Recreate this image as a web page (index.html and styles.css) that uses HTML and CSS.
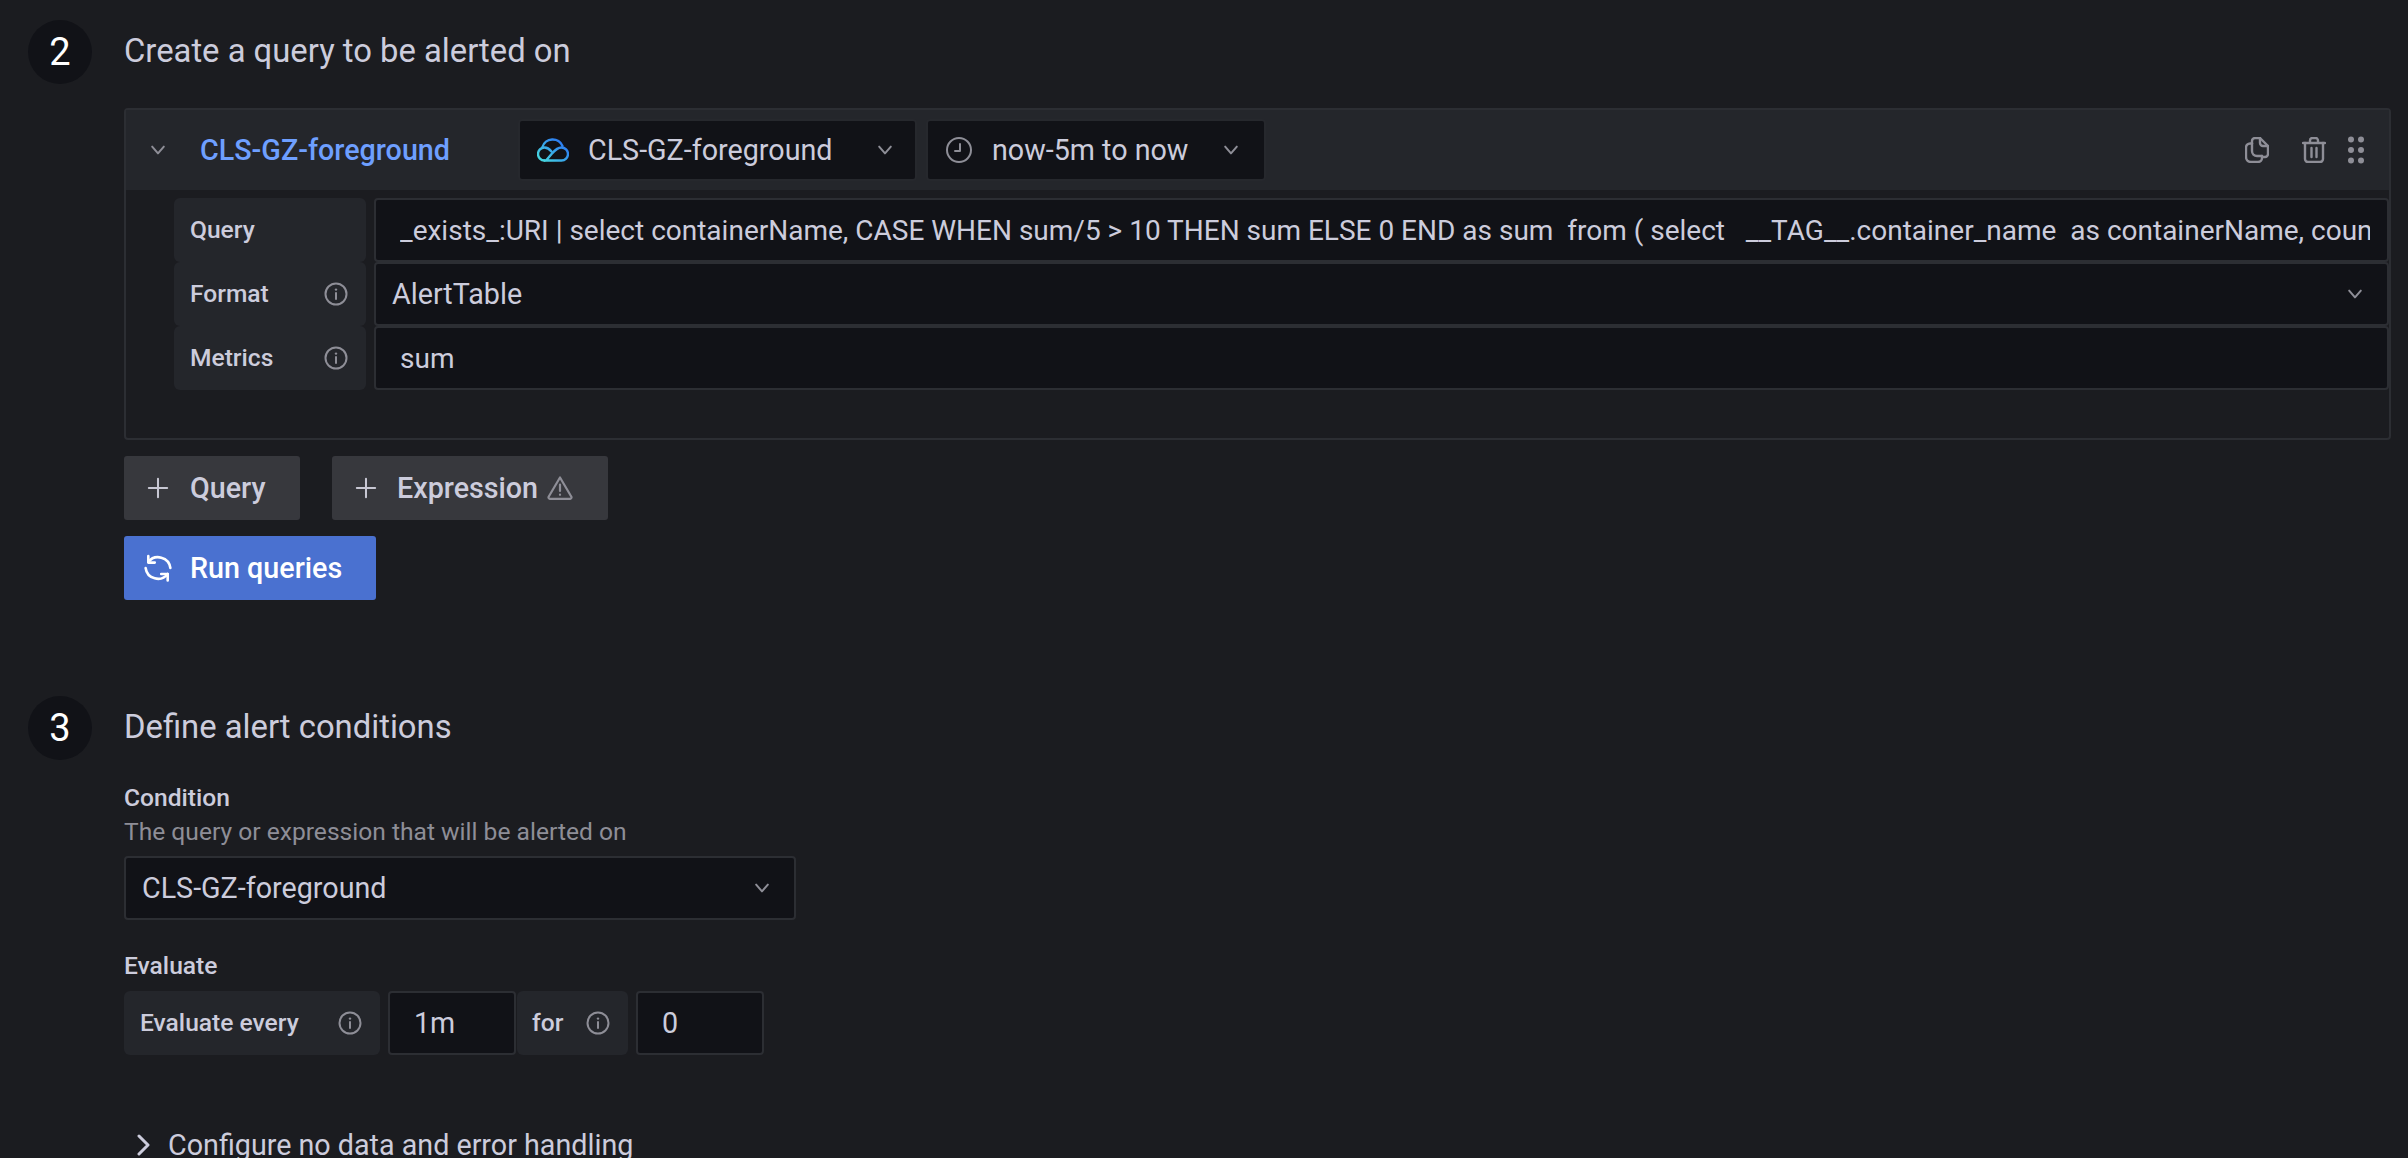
FILE: index.html
```html
<!DOCTYPE html>
<html lang="en">
<head>
<meta charset="utf-8">
<title>Alert rule</title>
<link rel="stylesheet" href="styles.css">
</head>
<body>
<svg class="defs" width="0" height="0" aria-hidden="true">
  <defs>
    <linearGradient id="cloudGrad" gradientUnits="userSpaceOnUse" x1="24" y1="0" x2="6" y2="22">
      <stop offset="0" stop-color="#2a72f5"/>
      <stop offset="1" stop-color="#45d3e0"/>
    </linearGradient>
    <symbol id="info" viewBox="0 0 24 24">
      <circle cx="12" cy="12" r="10.5" fill="none" stroke="currentColor" stroke-width="2"/>
      <path d="M12 11v6" stroke="currentColor" stroke-width="2" stroke-linecap="round"/>
      <circle cx="12" cy="7.6" r="1.2" fill="currentColor"/>
    </symbol>
    <symbol id="chev" viewBox="0 0 24 24">
      <path d="M5 8l7 8 7-8" fill="none" stroke="currentColor" stroke-width="2.4" stroke-linecap="round" stroke-linejoin="round"/>
    </symbol>
    <symbol id="plus" viewBox="0 0 24 24">
      <path d="M12 2v20M2 12h20" fill="none" stroke="currentColor" stroke-width="2.2" stroke-linecap="round"/>
    </symbol>
  </defs>
</svg>
<main class="page">
  <section class="step step-query">
    <div class="badge">2</div>
    <div class="step-body">
      <h2 class="step-title">Create a query to be alerted on</h2>
      <div class="panel">
        <div class="panel-head">
          <svg class="ico-chev head-chev"><use href="#chev"/></svg>
          <span class="query-name">CLS-GZ-foreground</span>
          <div class="picker picker-ds">
            <svg class="cloud" viewBox="0 0 32 24" fill="none" stroke="url(#cloudGrad)" stroke-width="2.4" stroke-linecap="round" stroke-linejoin="round">
              <path d="M5.500 9A10.500 10 0 0 1 25.500 8"/>
              <path d="M7.500 22.500H24.500A6.500 6.500 0 0 0 24.500 9.500C20.500 9.500 18 12 15 15.500L9.500 22"/>
              <path d="M7.500 22.500A6.500 6.500 0 0 1 7.500 9.500C10.500 9.500 12.500 11 14.500 13.500"/>
            </svg>
            <span class="picker-text">CLS-GZ-foreground</span>
            <svg class="ico-chev"><use href="#chev"/></svg>
          </div>
          <div class="picker picker-time">
            <svg class="clock" viewBox="0 0 26 26" fill="none" stroke="currentColor" stroke-width="2" stroke-linecap="round" stroke-linejoin="round">
              <circle cx="13" cy="13" r="12"/>
              <path d="M14 7v7H9"/>
            </svg>
            <span class="picker-text">now-5m to now</span>
            <svg class="ico-chev"><use href="#chev"/></svg>
          </div>
          <div class="head-actions">
            <svg class="act" viewBox="0 0 24 26" fill="none" stroke="currentColor" stroke-width="2.400" stroke-linejoin="round" stroke-linecap="round">
              <path d="M7 6.500V4a3 3 0 0 1 3-3h5l8 8v8a3 3 0 0 1-3 3h-2"/>
              <path d="M15 1v5a3 3 0 0 0 3 3h5"/>
              <path d="M7 6.500H5a4 4 0 0 0-4 4V20a5 5 0 0 0 5 5h7a4 4 0 0 0 4-4v-2"/>
              <path d="M7 6.500V14a5 5 0 0 0 5 5h5"/>
            </svg>
            <svg class="act act-trash" viewBox="0 0 24 26" fill="none" stroke="currentColor" stroke-width="2.400" stroke-linejoin="round" stroke-linecap="round">
              <path d="M1 6h22M8 6V3.500A2.500 2.500 0 0 1 10.500 1h3A2.500 2.500 0 0 1 16 3.500V6"/>
              <path d="M3 6v16a3 3 0 0 0 3 3h12a3 3 0 0 0 3-3V6"/>
              <path d="M9.500 11v9M14.500 11v9"/>
            </svg>
            <svg class="act act-dots" viewBox="0 0 16 28" fill="currentColor">
              <circle cx="3" cy="3.500" r="3"/><circle cx="13" cy="3.500" r="3"/>
              <circle cx="3" cy="14" r="3"/><circle cx="13" cy="14" r="3"/>
              <circle cx="3" cy="24.500" r="3"/><circle cx="13" cy="24.500" r="3"/>
            </svg>
          </div>
        </div>
        <div class="panel-rows">
          <div class="q-row">
            <div class="q-label">Query</div>
            <div class="field field-pad"><span class="clip">_exists_:URI | select containerName, CASE WHEN sum/5 &gt; 10 THEN sum ELSE 0 END as sum  from ( select   __TAG__.container_name  as containerName, coun</span></div>
          </div>
          <div class="q-row">
            <div class="q-label">Format<svg class="ico-info"><use href="#info"/></svg></div>
            <div class="field field-select"><span class="clip">AlertTable</span><svg class="ico-chev"><use href="#chev"/></svg></div>
          </div>
          <div class="q-row">
            <div class="q-label">Metrics<svg class="ico-info"><use href="#info"/></svg></div>
            <div class="field field-pad"><span class="clip">sum</span></div>
          </div>
        </div>
      </div>
      <div class="btn-row">
        <div class="btn btn-query"><svg class="ico-plus"><use href="#plus"/></svg>Query</div>
        <div class="btn btn-expr"><svg class="ico-plus"><use href="#plus"/></svg>Expression
          <svg class="warn" viewBox="0 0 26 24" fill="none" stroke="currentColor" stroke-width="2.200" stroke-linejoin="round" stroke-linecap="round">
            <path d="M13 1.500 1.500 21a1.500 1.500 0 0 0 1.300 1.800h20.400a1.500 1.500 0 0 0 1.300-1.800z"/>
            <path d="M13 8.500v6.500M13 18.500v.3"/>
          </svg>
        </div>
      </div>
      <div class="btn btn-run">
        <svg class="sync" viewBox="0 0 26 26" fill="none" stroke="currentColor" stroke-width="2.400" stroke-linecap="round" stroke-linejoin="round">
          <path d="M4 7.500A11.500 11.500 0 0 1 24.500 13"/>
          <path d="M4 2v6h6"/>
          <path d="M22 18.500A11.500 11.500 0 0 1 1.500 13"/>
          <path d="M22 24.500v-6h-6"/>
        </svg>
        Run queries
      </div>
    </div>
  </section>

  <section class="step step-cond">
    <div class="badge">3</div>
    <div class="step-body">
      <h2 class="step-title">Define alert conditions</h2>
      <div class="cond-label">Condition</div>
      <div class="cond-desc">The query or expression that will be alerted on</div>
      <div class="field field-select cond-select"><span class="clip">CLS-GZ-foreground</span><svg class="ico-chev"><use href="#chev"/></svg></div>
      <div class="cond-label eval-label">Evaluate</div>
      <div class="eval-row">
        <div class="q-label eval-every">Evaluate every<svg class="ico-info"><use href="#info"/></svg></div>
        <div class="field eval-input">1m</div>
        <div class="q-label eval-for">for<svg class="ico-info"><use href="#info"/></svg></div>
        <div class="field eval-input eval-input-2">0</div>
      </div>
      <div class="configure">
        <svg class="conf-chev" viewBox="0 0 14 22" fill="none" stroke="currentColor" stroke-width="3" stroke-linecap="round" stroke-linejoin="round"><path d="M2 2l9 9-9 9"/></svg>
        Configure no data and error handling
      </div>
    </div>
  </section>
</main>
</body>
</html>
```

FILE: styles.css
```css
* { box-sizing: border-box; }
html, body { margin: 0; height: 100%; }
body {
  background: #1b1c20;
  color: #ccccdc;
  font-family: Roboto, "Liberation Sans", sans-serif;
  font-size: 28.7px;
  overflow: hidden;
}
.defs { position: absolute; }
.page { padding: 20px 17px 0 28px; }
.step { display: flex; gap: 32px; }
.step-query { height: 676px; }
.step-body { flex: 1; min-width: 0; }
.badge {
  width: 64px; height: 64px; flex: none;
  border-radius: 50%;
  background: #111217;
  color: #fff;
  font-size: 38px;
  display: flex; align-items: center; justify-content: center;
}
.step-title {
  margin: 0;
  height: 64px;
  font-size: 32.8px;
  font-weight: 400;
  line-height: 62px;
  color: #ccccdc;
}
.panel {
  margin-top: 24px;
  height: 332px;
  border: 2px solid #2c2e33;
  border-radius: 4px;
}
.panel-head {
  height: 80px;
  background: #24262b;
  display: flex; align-items: center;
  padding: 0 0 0 22px;
}
.ico-chev { width: 20px; height: 20px; color: #8e8e97; flex: none; }
.head-chev { margin-right: 32px; }
.query-name {
  width: 318px;
  font-size: 28.7px; font-weight: 500;
  color: #6e9fff;
}
.picker {
  height: 62px;
  background: #111217;
  border: 2px solid #26282d;
  border-radius: 4px;
  display: flex; align-items: center;
  color: #ccccdc;
}
.picker-ds { width: 399px; padding-left: 17px; }
.picker-time { width: 340px; margin-left: 9px; padding-left: 18px; }
.cloud { width: 32px; height: 24px; flex: none; }
.clock { width: 26px; height: 26px; flex: none; color: #8e8e97; }
.picker-ds .picker-text { margin-left: 19px; width: 287px; }
.picker-time .picker-text { margin-left: 20px; width: 229px; }
.head-actions { margin-left: auto; display: flex; align-items: center; padding-right: 25px; }
.act { width: 24px; height: 26px; color: #8e8e97; }
.act-trash { margin-left: 33px; }
.act-dots { width: 16px; height: 28px; margin-left: 22px; }
.panel-rows { padding: 8px 0 0 48px; }
.q-row { display: flex; height: 64px; }
.q-label {
  width: 192px; height: 64px; flex: none;
  background: #24262b;
  border-radius: 6px;
  display: flex; align-items: center; justify-content: space-between;
  padding: 0 18px 2px 16px;
  font-size: 24.6px; font-weight: 500;
  color: #ccccdc;
}
.ico-info { width: 24px; height: 24px; color: #8e8e97; flex: none; position: relative; top: 1px; }
.field {
  height: 64px;
  background: #111217;
  border: 2px solid #2c2e33;
  border-radius: 4px;
  display: flex; align-items: center;
  color: #ccccdc;
}
.q-row .field { flex: 1; min-width: 0; margin-left: 8px; }
.clip { flex: 1; min-width: 0; overflow: hidden; white-space: pre; }
.field-pad { padding: 0 17px 0 24px; }
.field-pad .clip { font-size: 28px; }
.field-select { padding: 0 22px 0 16px; }
.btn-row { display: flex; gap: 32px; margin-top: 16px; }
.btn {
  height: 64px;
  display: inline-flex; align-items: center;
  background: #37383d;
  border-radius: 3px;
  font-weight: 500; font-size: 28.7px;
  color: #ccccdc;
  padding: 0 0 0 23px;
}
.btn-query { width: 176px; }
.btn-expr { width: 276px; }
.btn-expr .ico-plus { margin-right: 20px; }
.ico-plus { width: 22px; height: 22px; margin-right: 21px; color: #c7c7d3; flex: none; }
.warn { width: 26px; height: 24px; margin-left: 9px; color: #8e8e97; }
.btn-run {
  margin-top: 16px;
  display: flex; width: 252px;
  background: #4a71d0;
  color: #fff;
  padding: 0 0 0 20px;
}
.sync { width: 28px; height: 28px; margin-right: 18px; flex: none; }
.cond-label { font-size: 24.6px; font-weight: 500; color: #ccccdc; line-height: 28px; margin-top: 24px; }
.cond-desc { font-size: 24.6px; color: #8e8e97; line-height: 28px; margin-top: 6px; }
.cond-select { width: 672px; margin-top: 10px; }
.eval-label { margin-top: 32px; }
.eval-row { display: flex; margin-top: 11px; }
.eval-every { width: 256px; }
.eval-input { width: 128px; margin-left: 8px; padding-left: 24px; }
.eval-for { width: 111px; margin-left: 1px; padding-left: 15px; }
.eval-input-2 { margin-left: 8px; }
.configure {
  display: flex; align-items: center;
  margin: 70px 0 0 13px;
  font-size: 28.7px; line-height: 40px;
  color: #ccccdc;
}
.conf-chev { width: 14px; height: 22px; margin-right: 17px; }
```
